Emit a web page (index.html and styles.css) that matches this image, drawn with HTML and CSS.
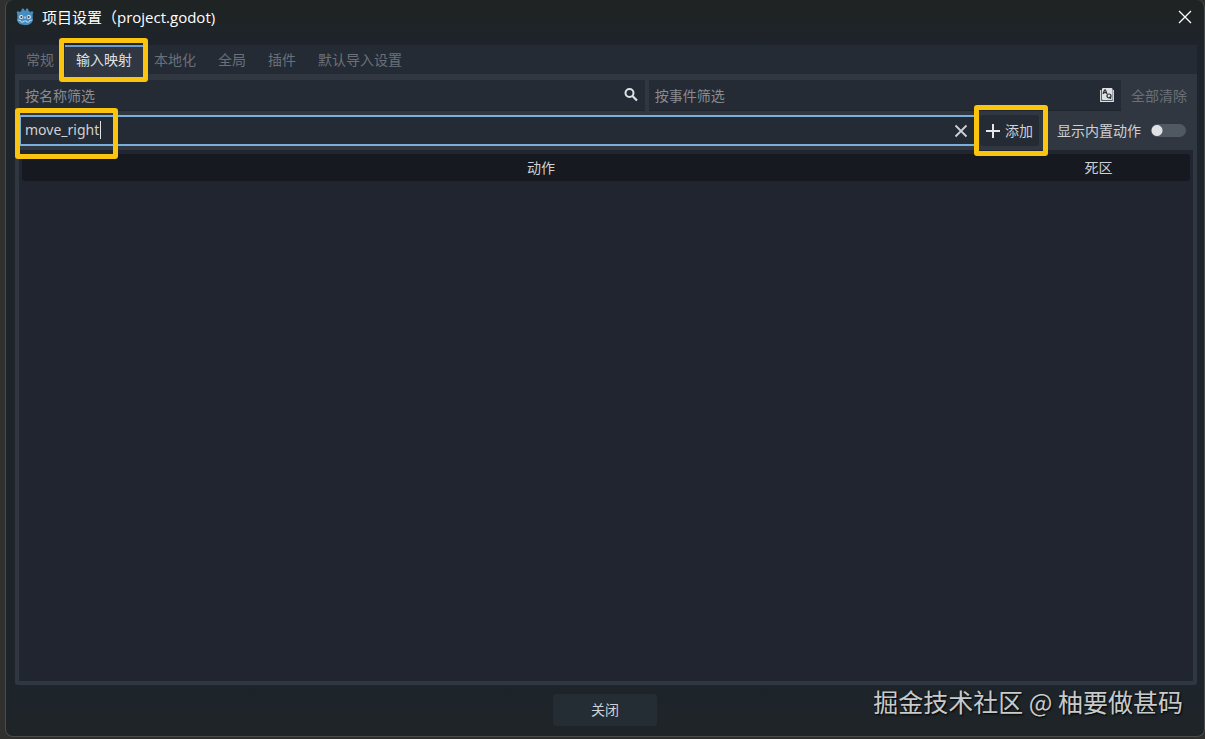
FILE: index.html
```
<!DOCTYPE html>
<html lang="zh-CN">
<head>
<meta charset="utf-8">
<title>项目设置（project.godot)</title>
<link rel="stylesheet" href="styles.css">
</head>
<body>

  <div class="window">
    <header class="titlebar">
      <svg class="logo" viewBox="0 0 18 18" width="18" height="18" aria-hidden="true">
        <path fill="#478cbf" d="M6 .5l2 .2.4 1.800h1.200l.4-1.800L12 .5l.8 2.600 1.600.8 1.700-1L17.400 4.500l-.7 1.700V12.500c-.6 3-3.700 4.700-7.700 4.700s-7.100-1.700-7.700-4.700V6.200L.6 4.500l1.300-1.600 1.700 1 1.600-.8z"/>
        <circle cx="5.200" cy="9" r="2.100" fill="#e8f2fa"/>
        <circle cx="12.800" cy="9" r="2.100" fill="#e8f2fa"/>
        <circle cx="5.400" cy="9.100" r="1.100" fill="#36485a"/>
        <circle cx="12.600" cy="9.100" r="1.100" fill="#36485a"/>
        <path d="M9 8.500v2" stroke="#e8f2fa" stroke-width="1.100"/>
        <path d="M1.500 12l3 .5.500 1.500 2.200.2.300-1.200h3l.3 1.200 2.200-.2.500-1.500 3-.5" fill="none" stroke="#d5e6f3" stroke-width=".8"/>
      </svg>
      <h1>项目设置（project.godot)</h1>
      <button class="window-close" type="button" aria-label="关闭窗口">
        <svg viewBox="0 0 14 14" width="14" height="14"><path d="M1 1l12 12M13 1L1 13" stroke="#fff" stroke-width="1.300"/></svg>
      </button>
    </header>

    <main class="content">
      <nav class="tabs">
        <button class="tab" type="button">常规</button>
        <button class="tab active" type="button">输入映射<span class="mark mark-tab"></span></button>
        <button class="tab" type="button">本地化</button>
        <button class="tab" type="button">全局</button>
        <button class="tab" type="button">插件</button>
        <button class="tab" type="button">默认导入设置</button>
      </nav>

      <section class="panel">
        <div class="row">
          <div class="field field-name">
            <input type="text" placeholder="按名称筛选" aria-label="按名称筛选">
            <svg viewBox="0 0 16 16" width="16" height="16" aria-hidden="true"><circle cx="6.500" cy="6" r="4" fill="none" stroke="#dfe1e4" stroke-width="2"/><path d="M9.500 9l4.500 4.500" stroke="#dfe1e4" stroke-width="2.200"/></svg>
          </div>
          <div class="field field-event">
            <input type="text" placeholder="按事件筛选" aria-label="按事件筛选">
            <svg viewBox="0 0 16 16" width="16" height="16" aria-hidden="true">
              <path d="M1.700 3v11.300h12.600V3" fill="none" stroke="#dfe1e4" stroke-width="1.200"/>
              <rect x="3" y="1" width="10.500" height="12" rx="1" fill="#dfe1e4"/>
              <path d="M4 7l1.500-4h1L8 7M4.700 5.700h2.600" fill="none" stroke="#252b34" stroke-width="1.200"/>
              <circle cx="10" cy="9" r="2" fill="none" stroke="#252b34" stroke-width="1.200"/>
              <path d="M10.300 9.800l1.700 1.900" stroke="#252b34" stroke-width="1.200"/>
            </svg>
          </div>
          <button class="btn btn-clear" type="button" disabled>全部清除</button>
        </div>

        <div class="row">
          <div class="field field-new">
            <input type="text" value="move_right" aria-label="添加新动作">
            <span class="caret"></span>
            <button class="icon-btn" type="button" aria-label="清空">
              <svg viewBox="0 0 16 16" width="16" height="16"><path d="M2.500 2.500l11 11M13.500 2.500l-11 11" stroke="#ced1d5" stroke-width="1.800"/></svg>
            </button>
            <span class="mark mark-name"></span>
          </div>
          <button class="btn btn-add" type="button">
            <svg viewBox="0 0 14 14" width="14" height="14" aria-hidden="true"><path d="M7 0v14M0 7h14" stroke="#e4e6e8" stroke-width="2"/></svg>
            添加
            <span class="mark mark-add"></span>
          </button>
          <label class="toggle">
            显示内置动作
            <input type="checkbox">
          </label>
        </div>

        <div class="tree">
          <table>
            <thead>
              <tr>
                <th class="col-action">动作</th>
                <th class="col-deadzone">死区</th>
                <td class="col-tools"></td>
              </tr>
            </thead>
          </table>
        </div>
      </section>
    </main>

    <footer class="footer">
      <button class="btn btn-close" type="button">关闭</button>
    </footer>
  </div>

  <div class="watermark">掘金技术社区 @ 柚要做甚码</div>

</body>
</html>
```
FILE: styles.css
```
* {
  box-sizing: border-box;
}

body {
  margin: 0;
  height: 100vh;
  padding: 0 0 2px 5px;
  overflow: hidden;
  background: #30302f;
  color: #ced1d5;
  font-family: "Noto Sans", "Noto Sans CJK SC", sans-serif;
  font-size: 14px;
  line-height: 20px;
}

button,
input {
  margin: 0;
  padding: 0;
  border: 0;
  background: none;
  color: inherit;
  font: inherit;
}

svg {
  display: block;
  flex: none;
}

.window {
  display: flex;
  flex-direction: column;
  height: 100%;
  border: 1px solid #494b4c;
  border-top: 0;
  border-radius: 8px;
  background: linear-gradient(#1f2323, #1d242b 50px, #1d242a 680px, #1f2428);
}

/* title bar */
.titlebar {
  display: flex;
  align-items: center;
  height: 33px;
  padding: 0 12px 0 10px;
}

.titlebar h1 {
  flex: 1;
  margin: 0 0 0 8px;
  color: #fff;
  font-family: "Open Sans", "Noto Sans CJK SC", sans-serif;
  font-size: 15px;
  font-weight: 400;
}

/* tabs */
.content {
  display: flex;
  flex: 1;
  flex-direction: column;
  padding: 12px 7px 0 9px;
}

.tabs {
  display: flex;
  height: 29px;
  background: #252b34;
}

.tab {
  position: relative;
  padding: 0 11px 2px;
  border-top: 2px solid transparent;
  color: #6b7078;
}

.tab.active {
  border-top-color: #6d9fca;
  background: #303743;
  color: #dfe1e4;
}

/* panel */
.panel {
  display: flex;
  flex: 1;
  flex-direction: column;
  gap: 4px;
  padding: 6px 4px 4px;
  border-radius: 0 0 3px 3px;
  background: #303741;
}

.row {
  display: flex;
  gap: 4px;
  height: 31px;
}

.field {
  position: relative;
  display: flex;
  align-items: center;
  min-width: 0;
  padding: 0 6px;
  border-bottom: 1px solid #20252d;
  background: #252b34;
}

.field input {
  flex: 1;
  min-width: 0;
  height: 100%;
  outline: 0;
}

.field input::placeholder {
  color: #888c93;
  opacity: 1;
}

.field-name {
  flex: 4;
}

.field-event {
  flex: 3;
}

.field-new {
  flex: 1;
  padding: 0 5px 0 4px;
  border: 2px solid #7aaedb;
}

.field-new input {
  padding-bottom: 2px;
}

.caret {
  position: absolute;
  top: 4px;
  left: 79px;
  width: 1px;
  height: 18px;
  background: #dfe1e4;
}

.btn {
  position: relative;
  display: flex;
  align-items: center;
  justify-content: center;
  gap: 5px;
  padding: 0 6px;
  border-radius: 3px;
  background: #252b34;
}

.btn-clear {
  background: none;
  color: #6b7078;
}

.toggle {
  display: flex;
  align-items: center;
  gap: 10px;
  padding: 0 7px 0 14px;
}

.toggle input {
  appearance: none;
  width: 35px;
  height: 13px;
  border-radius: 7px;
  background: radial-gradient(circle at 6px 50%, #dfe1e4 5px, #505861 6px);
}

/* action list */
.tree {
  flex: 1;
  padding: 4px 3px;
  background: #21252f;
}

.tree table {
  width: 100%;
  border-collapse: collapse;
  table-layout: fixed;
  border-radius: 3px;
  background: #16191f;
}

.tree th {
  height: 27px;
  padding: 0;
  font-weight: 400;
  text-align: center;
}

.col-deadzone {
  width: 77px;
}

.col-tools {
  width: 53px;
}

.footer {
  display: flex;
  justify-content: center;
  padding: 9px 0 10px;
}

.btn-close {
  width: 104px;
  height: 32px;
  background: #242c34;
}

/* yellow callouts */
.mark {
  position: absolute;
  z-index: 1;
  border: 5px solid #fbc40f;
  border-radius: 3px;
  pointer-events: none;
}

.mark-tab {
  inset: -9px -5px -8px -6px;
}

.mark-name {
  top: -9px;
  left: -6px;
  width: 103px;
  height: 51px;
}

.mark-add {
  inset: -10px -9px -10px -6px;
}

.watermark {
  position: absolute;
  right: 22px;
  bottom: 20px;
  color: #c8cacb;
  font-family: "Noto Sans CJK SC", sans-serif;
  font-size: 25px;
  line-height: 36px;
  text-shadow: 1px 1px 2px #000;
}
```
